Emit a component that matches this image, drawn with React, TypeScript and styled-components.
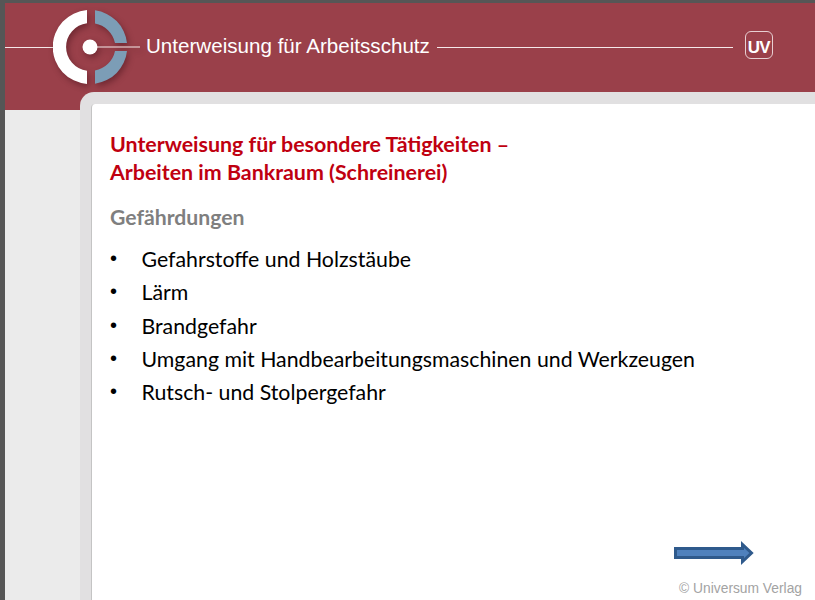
import React from "react";
import styled, { createGlobalStyle } from "styled-components";

const Global = createGlobalStyle`
  html, body { margin: 0; padding: 0; width: 815px; height: 600px; overflow: hidden; background: #565656; }
  #root { width: 815px; height: 600px; }
`;

const Page = styled.div`
  width: 815px;
  height: 600px;
  padding: 3px 0 0 5px;
  box-sizing: border-box;
  display: flex;
  flex-direction: column;
  overflow: hidden;
`;

const Header = styled.header`
  flex: none;
  height: 107px;
  background: #9a404a;
  display: flex;
  align-items: flex-start;
  padding-top: 44px;
  box-sizing: border-box;
`;

const Rule = styled.div<{ $width: number }>`
  flex: none;
  width: ${(p) => p.$width}px;
  height: 1px;
  background: #f6e9ea;
`;

const Logo = styled.svg`
  flex: none;
  width: 87px;
  height: 80px;
  margin: -37px 0 0 0;
  filter: drop-shadow(2px 3px 3px rgba(60, 10, 20, 0.45));
`;

const HeaderTitle = styled.h1`
  flex: none;
  margin: -12px 7px 0 6px;
  font: 400 20.6px/22px "Liberation Sans", Arial, sans-serif;
  color: #fff;
  white-space: nowrap;
`;

const UvBadge = styled.div`
  flex: none;
  width: 28px;
  height: 28px;
  margin: -16px 0 0 12px;
  box-sizing: border-box;
  border: 1px solid #e8cfd2;
  border-radius: 6px;
  color: #fff;
  font: 700 17px/31px "Liberation Sans", Arial, sans-serif;
  letter-spacing: -0.8px;
  text-align: center;
`;

const Body = styled.div`
  flex: 1;
  min-height: 0;
  background: #ebebeb;
  padding-left: 75px;
  display: flex;
`;

const Frame = styled.div`
  flex: 1;
  margin-top: -18px;
  padding: 12px 0 0 11px;
  background: #e1e0e1;
  border-radius: 14px 0 0 0;
  display: flex;
  min-width: 0;
`;

const Sheet = styled.main`
  flex: 1;
  background: #fff;
  border-left: 1px solid #c4c4c4;
  border-radius: 4px 0 0 0;
  padding: 27px 13px 3px 18px;
  display: flex;
  flex-direction: column;
  min-width: 0;
`;

const Title = styled.h2`
  margin: 0;
  font: 700 21.4px/27.5px Lato, sans-serif;
  color: #c00010;
`;

const Section = styled.h3`
  margin: 17px 0 0;
  font: 700 21.2px/28px Lato, sans-serif;
  color: #7f7f7f;
`;

const Bullets = styled.ul`
  margin: 12px 0 0;
  padding: 0;
  list-style: none;
`;

const Bullet = styled.li`
  display: flex;
  font: 400 21.3px/33.3px Lato, sans-serif;
  color: #000;
  white-space: nowrap;
  &::before {
    content: "•";
    flex: none;
    width: 31.5px;
    font: 400 20px/30px "Liberation Sans", sans-serif;
  }
`;

const Arrow = styled.svg`
  flex: none;
  width: 82px;
  height: 24px;
  margin: auto 47px 0 auto;
`;

const Copyright = styled.footer`
  flex: none;
  margin-top: 15px;
  text-align: right;
  font: 400 13.8px/17px "Liberation Sans", Arial, sans-serif;
  color: #a3a3a3;
`;

export default function App() {
  return (
    <Page>
      <Global />
      <Header>
        <Rule $width={48} />
        <Logo viewBox="0 0 87 80">
          <path d="M34 0.1 A37 37 0 0 0 34 73.9 V60.8 A24 24 0 0 1 34 13.2 Z" fill="#fff" />
          <path d="M42 0.3 A37 37 0 0 1 74 33 H62 A25 25 0 0 0 42 13.5 Z" fill="#7c9db6" />
          <path d="M42 73.7 A37 37 0 0 0 74 41 H62 A25 25 0 0 1 42 60.5 Z" fill="#7c9db6" />
          <rect x="37" y="36.5" width="50" height="1" fill="#f6e9ea" />
          <circle cx="37" cy="37" r="7.5" fill="#fff" />
        </Logo>
        <HeaderTitle>Unterweisung für Arbeitsschutz</HeaderTitle>
        <Rule $width={296} />
        <UvBadge>UV</UvBadge>
      </Header>
      <Body>
        <Frame>
          <Sheet>
            <Title>
              Unterweisung für besondere Tätigkeiten –<br />
              Arbeiten im Bankraum (Schreinerei)
            </Title>
            <Section>Gefährdungen</Section>
            <Bullets>
              <Bullet>Gefahrstoffe und Holzstäube</Bullet>
              <Bullet>Lärm</Bullet>
              <Bullet>Brandgefahr</Bullet>
              <Bullet>Umgang mit Handbearbeitungsmaschinen und Werkzeugen</Bullet>
              <Bullet>Rutsch- und Stolpergefahr</Bullet>
            </Bullets>
            <Arrow viewBox="0 0 82 24">
              <path d="M2.5 7.5 H69.5 V3.5 L78.5 12 L69.5 20.5 V16.5 H2.5 Z" fill="#4f81bd" stroke="#2f5a8c" strokeWidth="3" strokeLinejoin="miter" />
            </Arrow>
            <Copyright>© Universum Verlag</Copyright>
          </Sheet>
        </Frame>
      </Body>
    </Page>
  );
}
